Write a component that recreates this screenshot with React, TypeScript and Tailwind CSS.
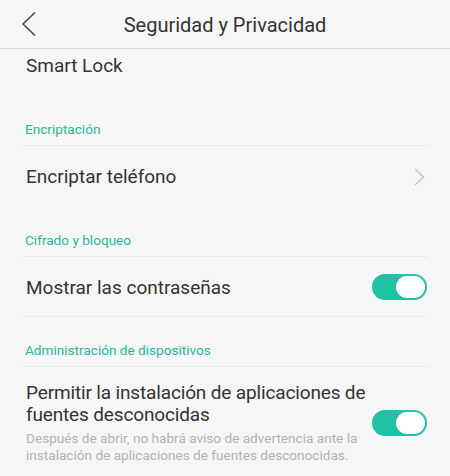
import React from "react";

const font = { fontFamily: "Roboto, 'Noto Sans', sans-serif" };

function Toggle() {
  return (
    <div className="relative h-[26px] w-[55px] shrink-0 rounded-full bg-[#22c1a4]">
      <div className="absolute right-[2px] top-[2px] h-[22px] w-[29px] rounded-full bg-white" />
    </div>
  );
}

function Section({ label, h }: { label: string; h: string }) {
  return (
    <div className={`flex ${h} flex-col justify-end`}>
      <div className="pl-[25px] pb-[6px] text-[13.6px] leading-[20px] text-[#1fb89c]">{label}</div>
      <div className="mx-[22px] h-px bg-[#ebebeb]" />
    </div>
  );
}

export default function App() {
  return (
    <div className="h-[476px] w-[450px] overflow-hidden bg-[#f6f6f6]" style={font}>
      <div className="relative flex h-[49px] items-center justify-center border-b border-[#dcdcdc]">
        <svg className="absolute left-[21px] top-[11px]" width="16" height="26" viewBox="0 0 16 26" fill="none">
          <path d="M14 1.5L2 13L14 24.5" stroke="#444" strokeWidth="1.5" />
        </svg>
        <div className="text-[20px] leading-[24px] text-[#333] mt-[1px]">Seguridad y Privacidad</div>
      </div>

      <div className="flex h-[34px] items-center pl-[26px] pt-[1px] text-[19px] text-[#333]">Smart Lock</div>

      <Section label="Encriptación" h="h-[63px]" />

      <div className="flex h-[62px] items-center justify-between pl-[26px] pr-[25px]">
        <span className="text-[19px] text-[#333]">Encriptar teléfono</span>
        <svg width="11" height="18" viewBox="0 0 11 18" fill="none">
          <path d="M1 1L9.5 9L1 17" stroke="#c6c6c6" strokeWidth="1.4" />
        </svg>
      </div>

      <Section label="Cifrado y bloqueo" h="h-[49px]" />

      <div className="flex h-[59px] items-center justify-between pl-[26px] pr-[23px]">
        <span className="pt-[3px] text-[19px] text-[#333]">Mostrar las contraseñas</span>
        <Toggle />
      </div>
      <div className="mx-[22px] h-px bg-[#ebebeb]" />

      <Section label="Administración de dispositivos" h="h-[50px]" />

      <div className="flex items-center justify-between pl-[26px] pr-[23px] pt-[15px]">
        <div className="whitespace-nowrap">
          <div className="text-[19px] leading-[22px] tracking-[-0.15px] text-[#333]">
            Permitir la instalación de aplicaciones de
            <br />
            fuentes desconocidas
          </div>
          <div className="mt-[4px] text-[13.6px] leading-[17px] text-[#b3b3b3]">
            Después de abrir, no habrá aviso de advertencia ante la
            <br />
            instalación de aplicaciones de fuentes desconocidas.
          </div>
        </div>
        <Toggle />
      </div>
    </div>
  );
}
